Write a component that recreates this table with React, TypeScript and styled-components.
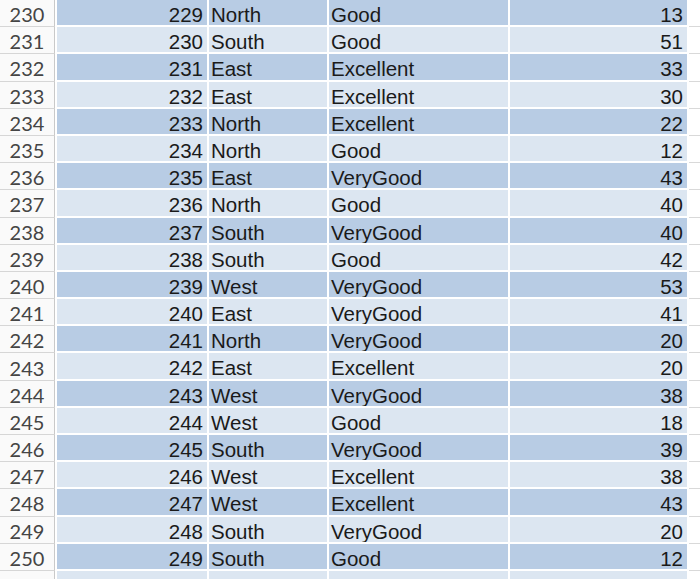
import React from "react";
import styled, { createGlobalStyle } from "styled-components";

const Global = createGlobalStyle`
  html, body { margin: 0; padding: 0; background: #ffffff; overflow: hidden; }
  #root { width: 700px; height: 579px; overflow: hidden; }
`;

type Rec = [number, string, string, number];

const DATA: Rec[] = [
  [229, "North", "Good", 13],
  [230, "South", "Good", 51],
  [231, "East", "Excellent", 33],
  [232, "East", "Excellent", 30],
  [233, "North", "Excellent", 22],
  [234, "North", "Good", 12],
  [235, "East", "VeryGood", 43],
  [236, "North", "Good", 40],
  [237, "South", "VeryGood", 40],
  [238, "South", "Good", 42],
  [239, "West", "VeryGood", 53],
  [240, "East", "VeryGood", 41],
  [241, "North", "VeryGood", 20],
  [242, "East", "Excellent", 20],
  [243, "West", "VeryGood", 38],
  [244, "West", "Good", 18],
  [245, "South", "VeryGood", 39],
  [246, "West", "Excellent", 38],
  [247, "West", "Excellent", 43],
  [248, "South", "VeryGood", 20],
  [249, "South", "Good", 12],
];

const Sheet = styled.div`
  display: flex;
  flex-direction: column;
  background: #ffffff;
`;

const Row = styled.div`
  display: grid;
  grid-template-columns: 55px 150px 118px 179px 177px 1fr;
  column-gap: 2px;
  height: 27.2px;
  flex: none;
`;

const Header = styled.div`
  box-sizing: border-box;
  height: 100%;
  border-right: 1px solid #c9c9c9;
  border-bottom: 1px solid #d6d6d6;
  background: #fafafa;
  color: #454545;
  font-family: Lato, "Liberation Sans", sans-serif;
  font-size: 20px;
  display: flex;
  align-items: center;
  justify-content: center;
  padding-top: 2px;
`;

const Cell = styled.div<{ $dark: boolean; $num?: boolean }>`
  box-sizing: border-box;
  height: 25.2px;
  background: ${(p) => (p.$dark ? "#b8cce4" : "#dce6f1")};
  color: #1a1a1a;
  font-family: "Liberation Sans", Arial, sans-serif;
  font-size: 20.5px;
  line-height: 25px;
  padding-top: 2px;
  white-space: nowrap;
  overflow: hidden;
  text-align: ${(p) => (p.$num ? "right" : "left")};
  padding-left: ${(p) => (p.$num ? "0" : "2px")};
  padding-right: ${(p) => (p.$num ? "4px" : "0")};
`;

const Filler = styled.div`
  height: 100%;
  box-sizing: border-box;
  border-bottom: 1px solid #d9d9d9;
`;

export default function App() {
  return (
    <>
      <Global />
      <Sheet>
        {DATA.map(([id, dir, qual, val], i) => {
          const dark = i % 2 === 0;
          return (
            <Row key={id}>
              <Header>{id + 1}</Header>
              <Cell $dark={dark} $num>
                {id}
              </Cell>
              <Cell $dark={dark}>{dir}</Cell>
              <Cell $dark={dark}>{qual}</Cell>
              <Cell $dark={dark} $num>
                {val}
              </Cell>
              <Filler />
            </Row>
          );
        })}
        <Row>
          <Header />
          <Cell $dark={false} />
          <Cell $dark={false} />
          <Cell $dark={false} />
          <Cell $dark={false} />
          <Filler />
        </Row>
      </Sheet>
    </>
  );
}
